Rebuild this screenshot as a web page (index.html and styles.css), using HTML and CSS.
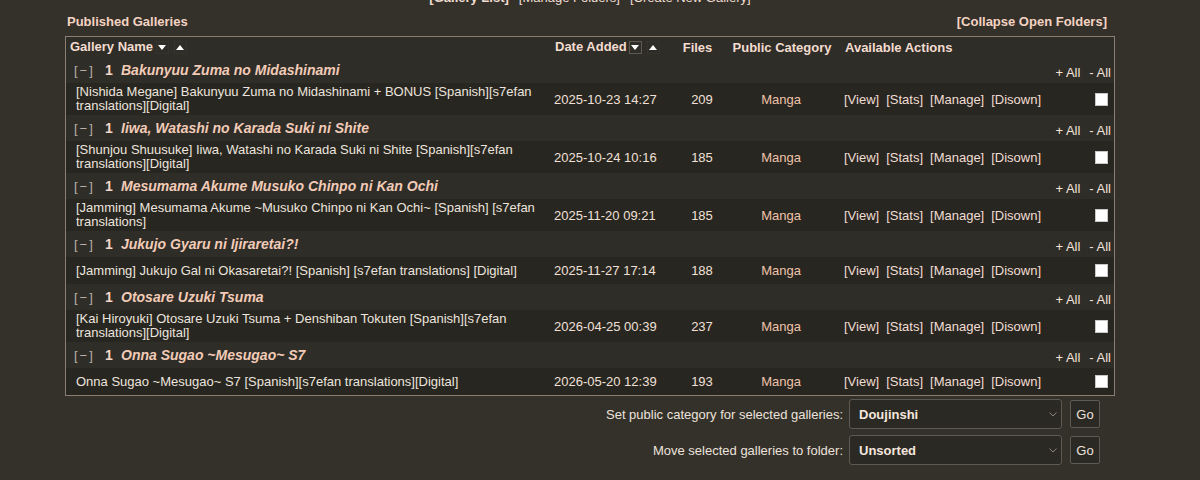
FILE: index.html
```html
<!DOCTYPE html>
<html lang="en">
<head>
<meta charset="utf-8">
<title>My Galleries</title>
<link rel="stylesheet" href="styles.css">
</head>
<body>
<div class="page">
  <nav class="toplinks">
    <a class="current">[Gallery List]</a>
    <a>[Manage Folders]</a>
    <a>[Create New Gallery]</a>
  </nav>

  <div class="caption">
    <span>Published Galleries</span>
    <a>[Collapse Open Folders]</a>
  </div>

  <div class="glist">
    <div class="row head">
      <div class="c-name">Gallery Name <span class="sort down"></span><span class="sort up"></span></div>
      <div class="c-date">Date Added <span class="sort down sel"></span><span class="sort up"></span></div>
      <div class="c-files">Files</div>
      <div class="c-cat">Public Category</div>
      <div class="c-act">Available Actions</div>
      <div class="c-chk"></div>
    </div>

    <div class="group">
      <div class="g-title"><span class="toggle">[−]</span><span class="count">1</span><span class="gname">Bakunyuu Zuma no Midashinami</span></div>
      <div class="g-all"><a>+ All</a><a>- All</a></div>
    </div>
    <div class="row item">
      <div class="c-name">[Nishida Megane] Bakunyuu Zuma no Midashinami + BONUS [Spanish][s7efan translations][Digital]</div>
      <div class="c-date">2025-10-23 14:27</div>
      <div class="c-files">209</div>
      <div class="c-cat">Manga</div>
      <div class="c-act"><a>[View]</a><a>[Stats]</a><a>[Manage]</a><a>[Disown]</a></div>
      <div class="c-chk"><input type="checkbox" class="pick"></div>
    </div>

    <div class="group">
      <div class="g-title"><span class="toggle">[−]</span><span class="count">1</span><span class="gname">Iiwa, Watashi no Karada Suki ni Shite</span></div>
      <div class="g-all"><a>+ All</a><a>- All</a></div>
    </div>
    <div class="row item">
      <div class="c-name">[Shunjou Shuusuke] Iiwa, Watashi no Karada Suki ni Shite [Spanish][s7efan translations][Digital]</div>
      <div class="c-date">2025-10-24 10:16</div>
      <div class="c-files">185</div>
      <div class="c-cat">Manga</div>
      <div class="c-act"><a>[View]</a><a>[Stats]</a><a>[Manage]</a><a>[Disown]</a></div>
      <div class="c-chk"><input type="checkbox" class="pick"></div>
    </div>

    <div class="group">
      <div class="g-title"><span class="toggle">[−]</span><span class="count">1</span><span class="gname">Mesumama Akume Musuko Chinpo ni Kan Ochi</span></div>
      <div class="g-all"><a>+ All</a><a>- All</a></div>
    </div>
    <div class="row item">
      <div class="c-name">[Jamming] Mesumama Akume ~Musuko Chinpo ni Kan Ochi~ [Spanish] [s7efan translations]</div>
      <div class="c-date">2025-11-20 09:21</div>
      <div class="c-files">185</div>
      <div class="c-cat">Manga</div>
      <div class="c-act"><a>[View]</a><a>[Stats]</a><a>[Manage]</a><a>[Disown]</a></div>
      <div class="c-chk"><input type="checkbox" class="pick"></div>
    </div>

    <div class="group">
      <div class="g-title"><span class="toggle">[−]</span><span class="count">1</span><span class="gname">Jukujo Gyaru ni Ijiraretai?!</span></div>
      <div class="g-all"><a>+ All</a><a>- All</a></div>
    </div>
    <div class="row item">
      <div class="c-name">[Jamming] Jukujo Gal ni Okasaretai?! [Spanish] [s7efan translations] [Digital]</div>
      <div class="c-date">2025-11-27 17:14</div>
      <div class="c-files">188</div>
      <div class="c-cat">Manga</div>
      <div class="c-act"><a>[View]</a><a>[Stats]</a><a>[Manage]</a><a>[Disown]</a></div>
      <div class="c-chk"><input type="checkbox" class="pick"></div>
    </div>

    <div class="group">
      <div class="g-title"><span class="toggle">[−]</span><span class="count">1</span><span class="gname">Otosare Uzuki Tsuma</span></div>
      <div class="g-all"><a>+ All</a><a>- All</a></div>
    </div>
    <div class="row item">
      <div class="c-name">[Kai Hiroyuki] Otosare Uzuki Tsuma + Denshiban Tokuten [Spanish][s7efan translations][Digital]</div>
      <div class="c-date">2026-04-25 00:39</div>
      <div class="c-files">237</div>
      <div class="c-cat">Manga</div>
      <div class="c-act"><a>[View]</a><a>[Stats]</a><a>[Manage]</a><a>[Disown]</a></div>
      <div class="c-chk"><input type="checkbox" class="pick"></div>
    </div>

    <div class="group">
      <div class="g-title"><span class="toggle">[−]</span><span class="count">1</span><span class="gname">Onna Sugao ~Mesugao~ S7</span></div>
      <div class="g-all"><a>+ All</a><a>- All</a></div>
    </div>
    <div class="row item">
      <div class="c-name">Onna Sugao ~Mesugao~ S7 [Spanish][s7efan translations][Digital]</div>
      <div class="c-date">2026-05-20 12:39</div>
      <div class="c-files">193</div>
      <div class="c-cat">Manga</div>
      <div class="c-act"><a>[View]</a><a>[Stats]</a><a>[Manage]</a><a>[Disown]</a></div>
      <div class="c-chk"><input type="checkbox" class="pick"></div>
    </div>
  </div>

  <div class="bulk">
    <div class="bulk-row">
      <label>Set public category for selected galleries:</label>
      <div class="select"><span>Doujinshi</span><svg class="chev" width="8" height="5" viewBox="0 0 8 5"><path d="M0.5 0.5 L4 4 L7.5 0.5" fill="none" stroke="#8a847c" stroke-width="1"/></svg></div>
      <button class="go">Go</button>
    </div>
    <div class="bulk-row">
      <label>Move selected galleries to folder:</label>
      <div class="select"><span>Unsorted</span><svg class="chev" width="8" height="5" viewBox="0 0 8 5"><path d="M0.5 0.5 L4 4 L7.5 0.5" fill="none" stroke="#8a847c" stroke-width="1"/></svg></div>
      <button class="go">Go</button>
    </div>
  </div>
</div>
</body>
</html>
```

FILE: styles.css
```css
html, body {
  margin: 0;
  background: #34312a;
  color: #f1e6e0;
  font-family: "Liberation Sans", Arial, sans-serif;
  font-size: 13px;
}

a { color: inherit; cursor: pointer; }

.page {
  margin-left: 65px;
  width: 1050px;
}

/* navigation strip, partly scrolled out of view */
.toplinks {
  margin-top: -10px;
  height: 16px;
  line-height: 16px;
  display: flex;
  justify-content: center;
  gap: 10px;
  color: #f0ddd2;
}
.toplinks .current { font-weight: bold; }

.caption {
  margin-top: 8px;
  margin-bottom: 6px;
  line-height: 16px;
  display: flex;
  justify-content: space-between;
  font-weight: bold;
  color: #f5d3c3;
  padding: 0 8px 0 2px;
}

/* gallery list */
.glist {
  border: 1px solid #8c7d72;
  background: #2f2d27;
}

.row {
  display: grid;
  grid-template-columns: 488px 126px 38px 126px 1fr 30px;
  align-items: center;
}

.head {
  height: 20px;
  font-weight: bold;
  color: #f3dcd0;
}
.head .c-name { padding-left: 4px; }
.head .c-date { padding-left: 1px; }
.head .c-files { text-align: center; padding-right: 3px; }
.head .c-cat { text-align: center; padding-left: 2px; white-space: nowrap; }
.head .c-act { padding-left: 1px; }

.sort {
  display: inline-block;
  vertical-align: middle;
  width: 13px;
  height: 13px;
  margin-left: -1px;
  box-sizing: border-box;
  border: 1px solid #35332c;
  position: relative;
  top: -1px;
}
.sort + .sort { margin-left: 5px; }
.sort::after {
  content: "";
  position: absolute;
  left: 1px;
  width: 0;
  height: 0;
  border-left: 4.5px solid transparent;
  border-right: 4.5px solid transparent;
}
.sort.down::after { top: 3px; border-top: 5px solid #ffffff; }
.sort.up::after { top: 3px; border-bottom: 5px solid #ffffff; }
.sort.sel { border: 1px solid #5e5a52; }

.group {
  height: 26px;
  display: flex;
  justify-content: space-between;
  align-items: center;
  padding: 0 3px 0 8px;
}
.g-title {
  display: flex;
  align-items: center;
}
.toggle {
  color: #b8b0a8;
  letter-spacing: 2px;
  width: 31px;
}
.count {
  font-weight: bold;
  font-size: 14px;
  color: #f5d6c8;
  width: 16px;
}
.gname {
  font-weight: bold;
  font-style: italic;
  font-size: 14px;
  color: #f2cbb7;
}
.g-all {
  display: flex;
  gap: 9px;
  padding-top: 4px;
  color: #f3e2da;
}

.item {
  background: #282620;
  min-height: 27px;
  color: #ece4de;
}
.item .c-name {
  padding: 2px 12px 2px 10px;
  line-height: 14px;
}
.item .c-files { text-align: center; padding-left: 6px; color: #f0e0d8; }
.item .c-date { color: #f0e0d8; }
.item .c-cat { text-align: center; color: #eec3aa; }
.item .c-act {
  display: flex;
  gap: 7px;
  color: #f0ddd4;
}
.c-chk {
  display: flex;
  justify-content: flex-end;
  padding-right: 6px;
}
.pick {
  appearance: none;
  margin: 0;
  width: 13px;
  height: 13px;
  background: #ffffff;
  border: 1px solid #c8c8c8;
  box-sizing: border-box;
}

/* bulk actions under the list */
.bulk {
  margin-top: 3px;
  padding-right: 15px;
  display: flex;
  flex-direction: column;
  gap: 6px;
}
.bulk-row {
  display: flex;
  justify-content: flex-end;
  align-items: center;
  height: 30px;
}
.bulk-row label {
  color: #ece2dc;
  margin-right: 6px;
}
.select {
  width: 213px;
  height: 30px;
  box-sizing: border-box;
  border: 1px solid #5f5a51;
  border-radius: 3px;
  background: #2b2923;
  display: flex;
  align-items: center;
  justify-content: space-between;
  padding: 0 4px 0 9px;
  font-weight: bold;
  color: #f5e6de;
}
.go {
  margin-left: 8px;
  width: 30px;
  height: 28px;
  background: #2b2923;
  border: 1px solid #5f5a51;
  border-radius: 2px;
  color: #ece2dc;
  font-family: "Liberation Sans", Arial, sans-serif;
  font-size: 13px;
  padding: 0;
}
```
